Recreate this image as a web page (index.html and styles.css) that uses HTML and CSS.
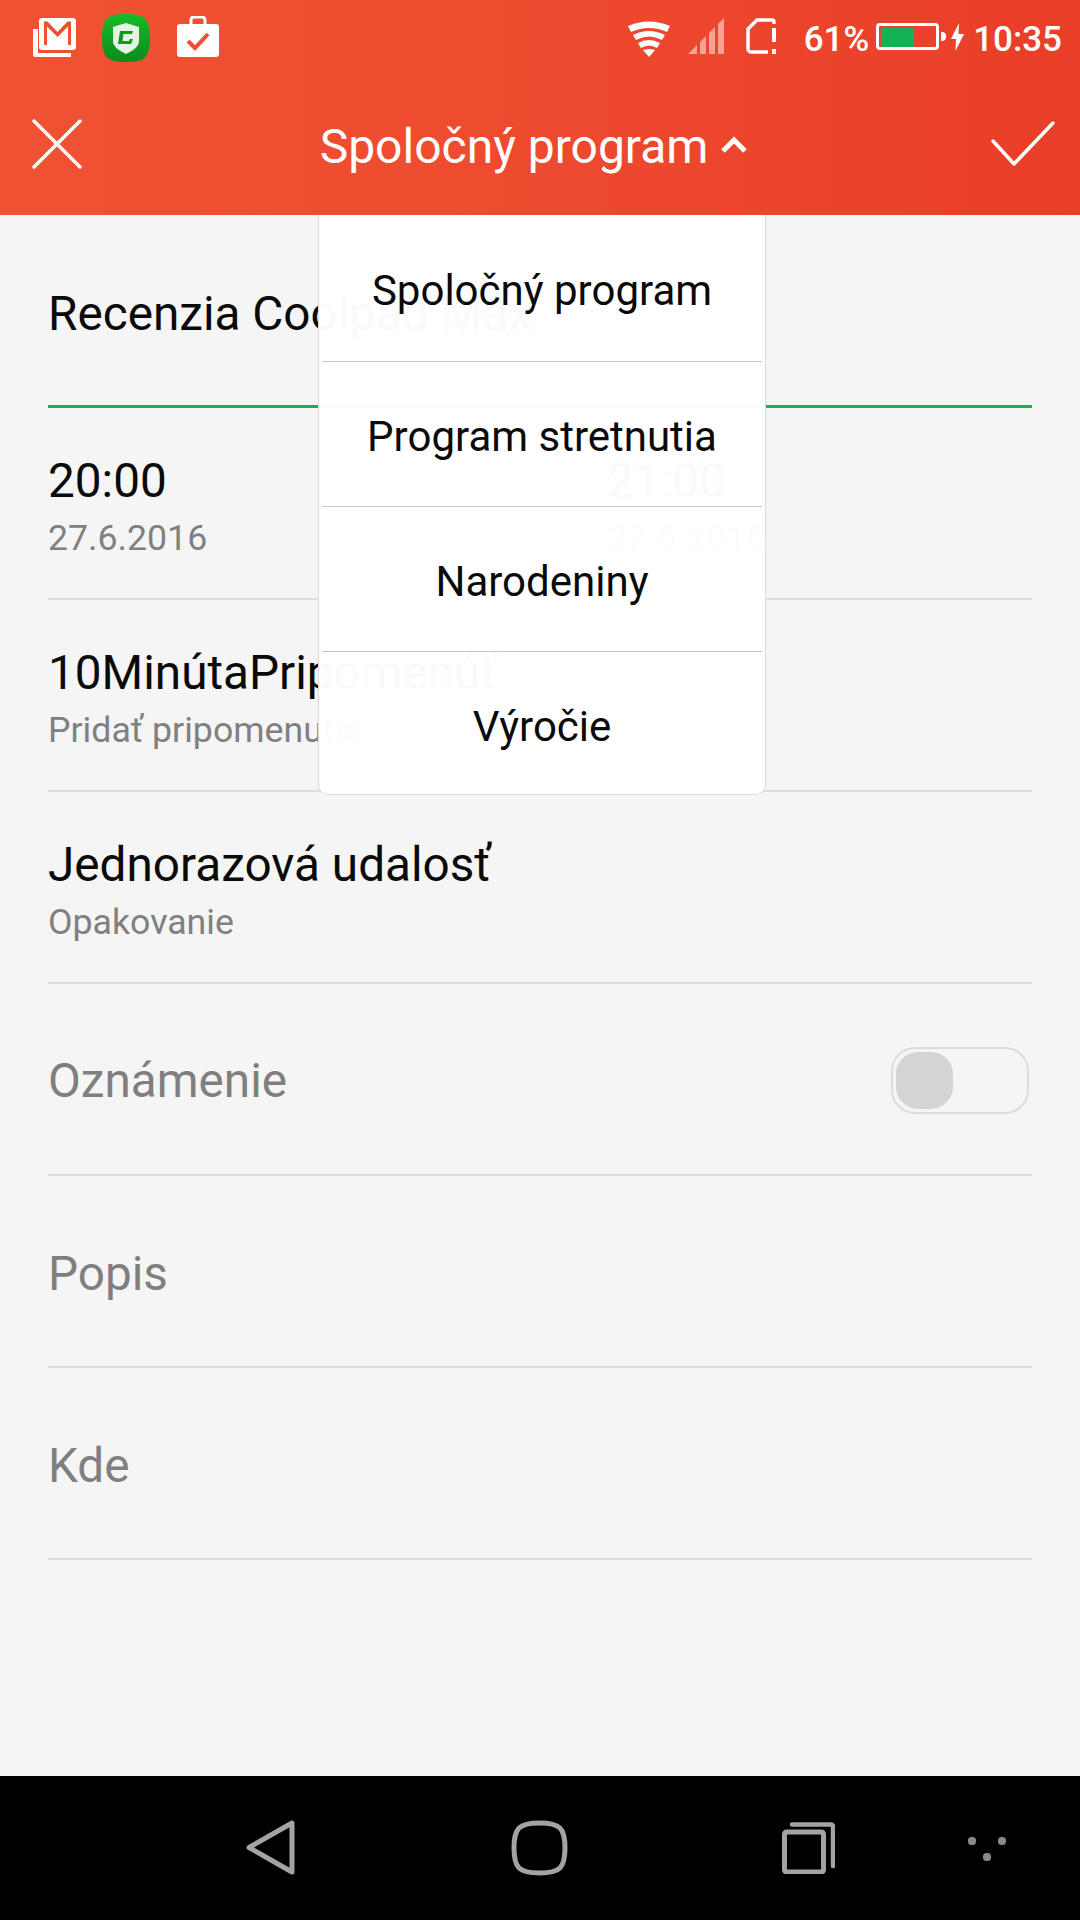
FILE: index.html
```html
<!DOCTYPE html>
<html lang="sk">
<head>
<meta charset="utf-8">
<title>Spoločný program</title>
<link rel="stylesheet" href="styles.css">
</head>
<body>
<div class="app">
  <header class="header">
    <div class="status">
      <div class="status-left">
        <svg class="ic-gmail" viewBox="0 0 43 39"><path d="M5 11H0v25.500A2.500 2.500 0 0 0 2.500 39H38v-4H5z" fill="#fff"/><path d="M9 0h31a3 3 0 0 1 3 3v26a3 3 0 0 1-3 3H9a3 3 0 0 1-3-3V3a3 3 0 0 1 3-3z" fill="#fff"/><path d="M11 3.500h3.500L24.500 14 34.500 3.500H38V27h-3V8.500L24.500 19 14 8.500V27h-3z" fill="#ef4f32"/></svg>
        <svg class="ic-guard" viewBox="0 0 48 48"><defs><linearGradient id="gg" x1="0" y1="0" x2="0" y2="1"><stop offset="0" stop-color="#16bb28"/><stop offset="1" stop-color="#0d8a1c"/></linearGradient></defs><path d="M24 0C40 0 48 2 48 24S40 48 24 48 0 46 0 24 8 0 24 0z" fill="url(#gg)"/><path d="M24 9l13 4v14c0 6-7 10-13 13-6-3-13-7-13-13V13z" fill="#e4f3e2"/><path d="M18 17h13l-1 3H21.500l-1 7H27l1-2h3l-2 5H16z" fill="#0f9a20"/></svg>
        <svg class="ic-case" viewBox="0 0 42 41"><path d="M14 8V4a3 3 0 0 1 3-3h8a3 3 0 0 1 3 3v4" fill="none" stroke="#fff" stroke-width="3"/><rect x="0" y="8" width="42" height="33" rx="3" fill="#fff"/><path d="M11 25l7 7L31 18" fill="none" stroke="#ef4f32" stroke-width="4"/></svg>
      </div>
      <div class="status-right">
        <svg class="ic-wifi" viewBox="0 0 42 37"><path d="M0 6Q21-3 42 6l-3 6Q21 4 3 12z" fill="#fff"/><path d="M5 15Q21 7 37 15l-3 5Q21 13 8 20z" fill="#fff"/><path d="M10 23Q21 17 32 23l-3 5Q21 23 13 28z" fill="#fff"/><path d="M15 30Q21 28 27 30l-6 7z" fill="#fff"/></svg>
        <svg class="ic-signal" viewBox="0 0 36 36"><path d="M0 36l9-9v9zM12 36V24l6-6v18zM21 36V15l6-6v27zM30 36V6l6-6v36z" fill="#fff" fill-opacity=".5"/></svg>
        <svg class="ic-sim" viewBox="0 0 30 36"><path d="M22 34H5a3 3 0 0 1-3-3V11L11 2h15a2 2 0 0 1 2 2v2" fill="none" stroke="#fff" stroke-width="3.500"/><path d="M26 10h4v14h-4zM26 31h4v5h-4z" fill="#fff"/></svg>
        <span class="status-text pct">61%</span>
        <div class="battery"><div class="battery-fill"></div></div>
        <div class="battery-nub"></div>
        <svg class="ic-bolt" viewBox="0 0 13 28"><path d="M8 0L0 16h5l-.5 12L13 11H7.500z" fill="#fff"/></svg>
        <span class="status-text time">10:35</span>
      </div>
    </div>
    <div class="toolbar">
      <svg class="ic-close" viewBox="0 0 50 50"><path d="M2 2l46 46M48 2L2 48" fill="none" stroke="#fff" stroke-width="3.500" stroke-linecap="round"/></svg>
      <div class="toolbar-title">
        <span>Spoločný program</span>
        <svg class="ic-chevron" viewBox="0 0 26 18"><path d="M2 15L13 4l11 11" fill="none" stroke="#fff" stroke-width="5"/></svg>
      </div>
      <svg class="ic-check" viewBox="0 0 64 46"><path d="M2 20l21 23L62 2" fill="none" stroke="#fff" stroke-width="3.500" stroke-linecap="round" stroke-linejoin="round"/></svg>
    </div>
  </header>

  <main class="content">
    <div class="form">
      <div class="row row-title">
        <span class="primary">Recenzia Coolpad Max</span><span class="caret"></span>
      </div>
      <div class="row row-time">
        <div class="cell">
          <div class="primary">20:00</div>
          <div class="secondary">27.6.2016</div>
        </div>
        <div class="cell">
          <div class="primary">21:00</div>
          <div class="secondary">27.6.2016</div>
        </div>
      </div>
      <div class="row">
        <div class="primary">10MinútaPripomenúť</div>
        <div class="secondary">Pridať pripomenutie</div>
      </div>
      <div class="row">
        <div class="primary">Jednorazová udalosť</div>
        <div class="secondary">Opakovanie</div>
      </div>
      <div class="row row-switch">
        <div class="muted">Oznámenie</div>
        <div class="switch"><div class="switch-thumb"></div></div>
      </div>
      <div class="row"><div class="muted">Popis</div></div>
      <div class="row"><div class="muted">Kde</div></div>
    </div>

    <div class="menu">
      <div class="menu-item">Spoločný program</div>
      <div class="menu-item">Program stretnutia</div>
      <div class="menu-item">Narodeniny</div>
      <div class="menu-item">Výročie</div>
    </div>
  </main>

  <nav class="navbar">
    <svg class="ic-back" viewBox="0 0 50 57"><path d="M46 4v49L3 28.500z" fill="none" stroke="#a3a3a3" stroke-width="5" stroke-linejoin="round"/></svg>
    <svg class="ic-home" viewBox="0 0 57 56"><path d="M28.500 3C49 3 54 8 54 28S49 53 28.500 53 3 48 3 28 8 3 28.500 3z" fill="none" stroke="#a3a3a3" stroke-width="5"/></svg>
    <svg class="ic-recent" viewBox="0 0 53 52"><rect x="2.500" y="10" width="39" height="40" rx="2" fill="none" stroke="#a3a3a3" stroke-width="5"/><path d="M10 2.500h39a2 2 0 0 1 2 2V44" fill="none" stroke="#a3a3a3" stroke-width="4.500" stroke-linecap="round"/></svg>
    <svg class="ic-dots" viewBox="0 0 38 24"><rect x="0" y="0" width="8" height="8" rx="3.500" fill="#8a8a8a"/><rect x="30" y="0" width="8" height="8" rx="3.500" fill="#8a8a8a"/><rect x="15" y="16" width="8" height="8" rx="3.500" fill="#8a8a8a"/></svg>
  </nav>
</div>
</body>
</html>
```
FILE: styles.css
```css
* { box-sizing: border-box; }
html, body { margin: 0; padding: 0; }
body { font-family: Roboto, "Noto Sans", sans-serif; background: #f5f5f5; }

.app { width: 1080px; height: 1920px; display: flex; flex-direction: column; overflow: hidden; }

.header { height: 215px; background: linear-gradient(90deg, #f05233 0%, #ee4a2f 50%, #e93e28 100%); color: #fff; flex: none; }

.status { height: 72px; display: flex; justify-content: space-between; align-items: flex-start; padding: 0 18px 0 33px; }
.status-left { display: flex; align-items: flex-start; }
.status-right { display: flex; align-items: flex-start; }
.status svg { display: block; flex: none; }
.ic-gmail { width: 43px; height: 39px; margin-top: 18px; }
.ic-guard { width: 48px; height: 48px; margin: 14px 0 0 26px; }
.ic-case { width: 42px; height: 41px; margin: 16px 0 0 27px; }
.ic-wifi { width: 42px; height: 37px; margin-top: 20px; }
.ic-signal { width: 36px; height: 36px; margin: 18px 0 0 18px; }
.ic-sim { width: 30px; height: 36px; margin: 18px 0 0 22px; }
.status-text { font-size: 35px; line-height: 40px; margin-top: 20px; font-weight: 500; letter-spacing: 0; }
.pct { margin-left: 28px; }
.time { margin-left: 9px; }
.battery { width: 63px; height: 27px; margin: 23px 0 0 7px; border: 3px solid #fff; border-radius: 4px; padding: 2px; }
.battery-fill { width: 33px; height: 19px; background: #12b355; }
.battery-nub { width: 5px; height: 9px; margin: 32px 0 0 2px; background: #fff; border-radius: 0 4px 4px 0; }
.ic-bolt { width: 13px; height: 28px; margin: 23px 0 0 5px; }

.toolbar { height: 143px; display: flex; justify-content: space-between; align-items: center; padding: 0 25px 0 32px; position: relative; }
.toolbar svg { display: block; flex: none; }
.ic-close { width: 50px; height: 50px; }
.ic-check { width: 64px; height: 46px; }
.toolbar-title { display: flex; align-items: center; gap: 13px; font-size: 48px; line-height: 56px; font-weight: 400; padding-top: 6px; margin-right: 6px; }
.ic-chevron { width: 26px; height: 18px; margin-top: -4px; }

.content { flex: 1; position: relative; }
.form { padding: 0 48px; }
.row { height: 192px; border-bottom: 2px solid #dedede; display: flex; flex-direction: column; justify-content: center; padding-top: 6px; }
.row-title { height: 193px; flex-direction: row; justify-content: flex-start; align-items: center; border-bottom: 3px solid #12b355; padding-top: 7px; }
.row-time { flex-direction: row; justify-content: flex-start; }
.row-time .cell:first-child { width: 559px; }
.row-switch { flex-direction: row; justify-content: space-between; align-items: center; padding-top: 4px; }

.primary { font-size: 47.7px; line-height: 56px; color: #0a0a0a; }
.secondary { font-size: 35.7px; line-height: 42px; color: #808080; margin-top: 8px; }
.muted { font-size: 47.7px; line-height: 56px; color: #7f7f7f; }
.caret { width: 2px; height: 58px; background: #12b355; margin-left: 3px; }
.row-time .cell { align-self: center; }

.switch { width: 138px; height: 67px; margin: -2px 3px 0 0; border: 2px solid #dcdcdc; border-radius: 24px; padding: 3px; }
.switch-thumb { width: 57px; height: 57px; background: #d4d4d4; border-radius: 22px; }

.menu { position: absolute; left: 318px; top: 0; width: 448px; height: 580px; padding: 0 3px; background: rgba(255, 255, 255, .98); border: 1px solid #dcdcdc; border-top: 0; border-radius: 0 0 10px 10px; }
.menu-item { height: 145px; display: flex; align-items: center; justify-content: center; font-size: 42px; color: #0a0a0a; border-bottom: 1px solid #c6c6c6; padding-top: 5px; }
.menu-item:first-child { height: 147px; }
.menu-item:last-child { border-bottom: 0; height: 143px; }

.navbar { height: 144px; background: #000; flex: none; position: relative; display: flex; align-items: flex-start; padding-left: 246px; }
.navbar svg { display: block; flex: none; }
.ic-back { width: 50px; height: 57px; margin-top: 43px; }
.ic-home { width: 57px; height: 56px; margin: 44px 0 0 215px; }
.ic-recent { width: 53px; height: 52px; margin: 46px 0 0 214px; }
.ic-dots { width: 38px; height: 24px; margin: 61px 0 0 133px; }
```
